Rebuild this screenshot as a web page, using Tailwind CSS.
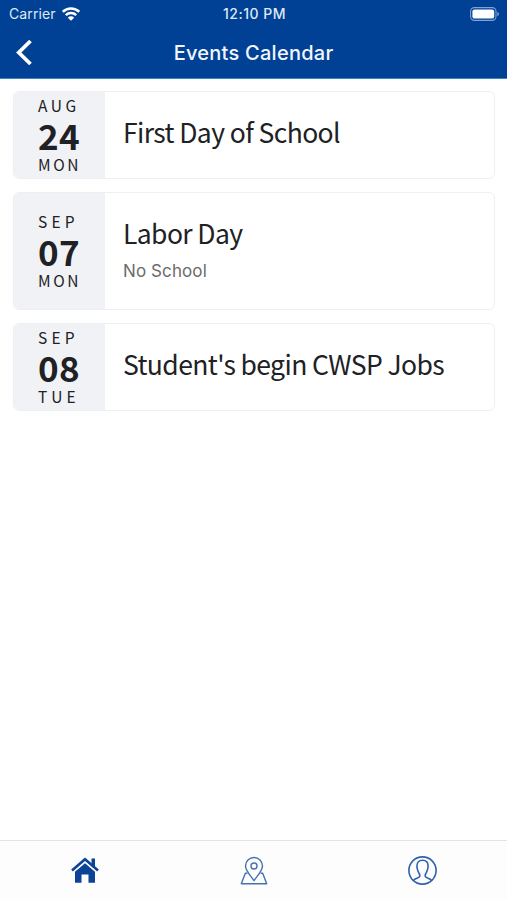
<!DOCTYPE html>
<html lang="en">
<head>
    <title>Events Calendar</title>
    <meta charset="UTF-8">
    <meta name="viewport" content="width=device-width, initial-scale=1">
    <script src="https://cdn.jsdelivr.net/npm/@tailwindcss/browser@4"></script>
</head>
<body class="flex h-screen flex-col overflow-hidden bg-white font-['Inter',sans-serif]">

    <!-- Status bar + nav bar -->
    <header class="h-[79px] shrink-0 border-b border-[#3f7fc4] bg-[#004195] text-white">
        <div class="grid h-[27px] grid-cols-3 items-center pr-[7px] pl-[9px] text-[14px] text-[#dfe9f6]">
            <div class="flex items-center gap-[6px]">
                <span class="tracking-[0.1px]">Carrier</span>
                <svg class="h-[14px] w-[18px]" viewBox="0 0 18 14" fill="none" stroke="#fff" stroke-width="2.5">
                    <path d="M.8 4.8a11.8 11.8 0 0 1 16.4 0M3.8 8.2a7.5 7.5 0 0 1 10.4 0"/>
                    <path d="M9 13.8 5.8 10.7a4.5 4.5 0 0 1 6.4 0z" fill="#fff" stroke="none"/>
                </svg>
            </div>
            <span class="text-center text-[14px] font-medium tracking-[0.5px] whitespace-nowrap">12:10 PM</span>
            <svg class="h-[14px] w-[30px] justify-self-end" viewBox="0 0 30 14">
                <rect x=".6" y=".6" width="25.4" height="12.8" rx="3.8" fill="none" stroke="#7fa3d2" stroke-width="1.1"/>
                <rect x="2.4" y="2.4" width="21.8" height="9.2" rx="2.2" fill="#fff"/>
                <path d="M27.3 4.9v4.2c1-.4 1.7-1.2 1.7-2.1s-.7-1.7-1.7-2.1z" fill="#7fa3d2"/>
            </svg>
        </div>
        <div class="grid h-[51px] grid-cols-[60px_1fr_60px] items-center">
            <svg class="ml-[16px] h-[27px] w-[17px]" viewBox="0 0 17 27" fill="none" stroke="#fff" stroke-width="3.8">
                <path d="M14.5 2 2.8 13.5 14.5 25"/>
            </svg>
            <h1 class="text-center text-[20px] font-medium tracking-[0.25px] text-[#f2f6fc]">Events Calendar</h1>
        </div>
    </header>

    <main class="flex flex-1 flex-col gap-[13px] pt-[12px] pr-[12px] pl-[13px] font-['Noto_Sans_CJK_SC',sans-serif] text-[#202124]">
        <article class="flex h-[88px] overflow-hidden rounded-[6px] border border-[#edf0f2]">
            <div class="flex w-[91px] flex-col justify-center bg-[#f1f2f6] pb-[1px] pl-[24px] text-[15.5px] leading-[23px]">
                <span class="tracking-[3.6px]">AUG</span>
                <span class="text-[35px] leading-[36px] font-bold tracking-[0.3px]">24</span>
                <span class="tracking-[2.6px]">MON</span>
            </div>
            <div class="flex flex-1 flex-col justify-center pb-[6px] pl-[18px]">
                <h2 class="text-[26.5px] leading-[40px] tracking-[-0.6px] whitespace-nowrap">First Day of School</h2>
            </div>
        </article>

        <article class="flex h-[118px] overflow-hidden rounded-[6px] border border-[#edf0f2]">
            <div class="flex w-[91px] flex-col justify-center bg-[#f1f2f6] pb-[1px] pl-[24px] text-[15.5px] leading-[23px]">
                <span class="tracking-[4.2px]">SEP</span>
                <span class="text-[35px] leading-[36px] font-bold tracking-[0.3px]">07</span>
                <span class="tracking-[2.6px]">MON</span>
            </div>
            <div class="flex flex-1 flex-col justify-center pb-[7px] pl-[18px]">
                <h2 class="text-[26.5px] leading-[40px] tracking-[-0.6px] whitespace-nowrap">Labor Day</h2>
                <p class="mt-[6px] font-['Inter',sans-serif] text-[17px] leading-[24px] tracking-[0.1px] text-[#6b6b6b]">No School</p>
            </div>
        </article>

        <article class="flex h-[88px] overflow-hidden rounded-[6px] border border-[#edf0f2]">
            <div class="flex w-[91px] flex-col justify-center bg-[#f1f2f6] pb-[1px] pl-[24px] text-[15.5px] leading-[23px]">
                <span class="tracking-[4.2px]">SEP</span>
                <span class="text-[35px] leading-[36px] font-bold tracking-[0.3px]">08</span>
                <span class="tracking-[4px]">TUE</span>
            </div>
            <div class="flex flex-1 flex-col justify-center pb-[6px] pl-[18px]">
                <h2 class="text-[26.5px] leading-[40px] tracking-[-0.6px] whitespace-nowrap">Student's begin CWSP Jobs</h2>
            </div>
        </article>
    </main>

    <!-- Tab bar -->
    <nav class="grid h-[60px] shrink-0 grid-cols-3 items-center justify-items-center border-t border-[#e3e3e3] bg-[#fdfdfd]">
        <svg class="size-[30px]" viewBox="0 0 30 30" fill="#0b4396">
            <path d="M5 15.8 15 7.3l10 8.5V26.7h-6.500v-8.200h-7v8.200H5z"/>
            <path d="M2 14.6 15 3.300l13 11.300" fill="none" stroke="#0b4396" stroke-width="2.6"/>
            <path d="M2.500 16.800 15 6.100l12.500 10.700" fill="none" stroke="#fdfdfd" stroke-width=".7"/>
            <path d="M21.500 2.500H25v9l-3.500-3z"/>
        </svg>
        <svg class="size-[30px]" viewBox="0 0 30 30" fill="none" stroke="#4372b3" stroke-width="1.4" stroke-linejoin="round">
            <path d="M15 24.700C12.500 20.700 6.500 15 6.500 10a8.500 8.500 0 0 1 17 0c0 5-6 10.700-8.500 14.700z"/>
            <circle cx="15" cy="10" r="3"/>
            <path d="M8.400 17.300H6.300L2.300 27.700h25.400l-4-10.400h-2.100"/>
        </svg>
        <svg class="size-[30px]" viewBox="0 0 30 30" fill="none" stroke="#2e62aa" stroke-width="1.6">
            <circle cx="14.5" cy="14.5" r="13.6"/>
            <path d="M5.500 24.700c.8-2.400 5.800-2.300 6.300-4.400.3-1.900-.5-2.600-1.300-4-1-1.900-1.600-4-1.600-6.300 0-3.500 2.200-5.700 5.600-5.700s5.600 2.200 5.600 5.700c0 2.300-.6 4.400-1.600 6.300-.8 1.400-1.600 2.100-1.300 4 .5 2.100 5.500 2 6.300 4.400"/>
        </svg>
    </nav>
</body>
</html>
